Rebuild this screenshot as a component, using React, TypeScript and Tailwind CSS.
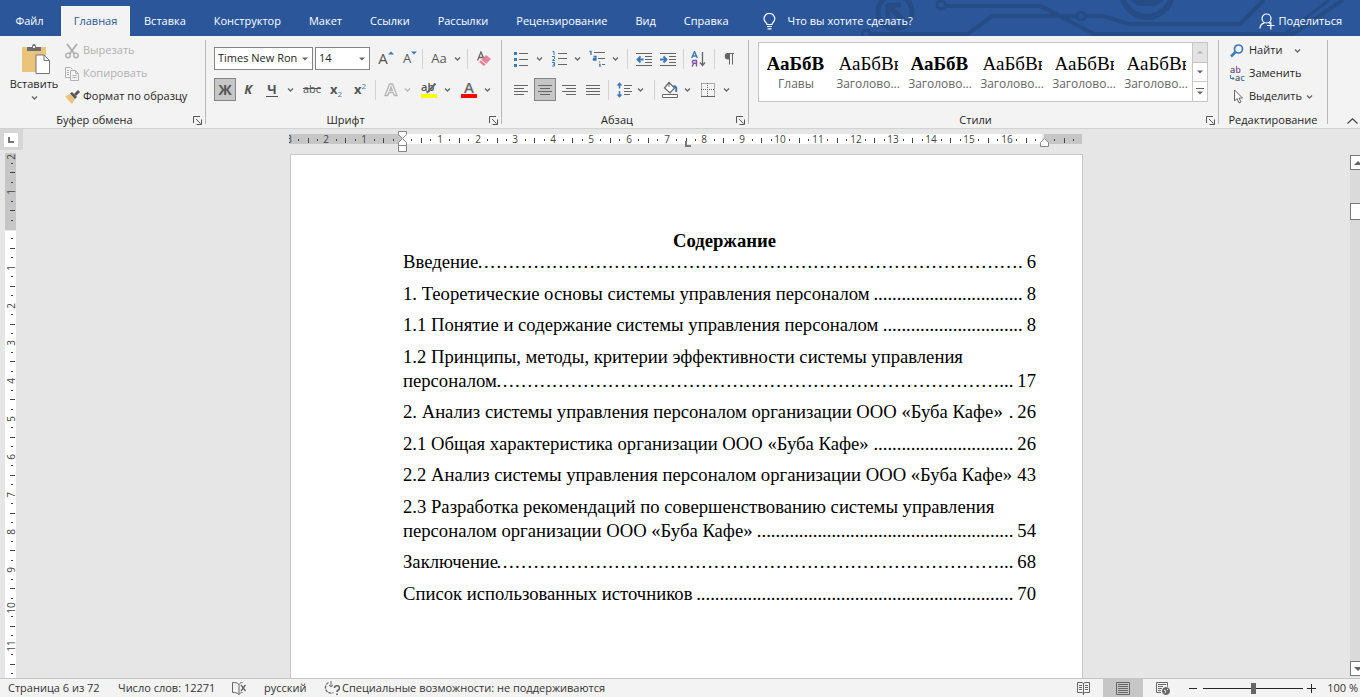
import type { ReactNode } from 'react';

const GRAY = '#666666';
const BLUE = '#3b78b8';

const tabs = ['Вставка', 'Конструктор', 'Макет', 'Ссылки', 'Рассылки', 'Рецензирование', 'Вид', 'Справка'];

const styleItems = [
  { label: 'Главы', sample: 'АаБбВ', bold: true },
  { label: 'Заголово...', sample: 'АаБбВв', bold: false },
  { label: 'Заголово...', sample: 'АаБбВ', bold: true },
  { label: 'Заголово...', sample: 'АаБбВв', bold: false },
  { label: 'Заголово...', sample: 'АаБбВв', bold: false },
  { label: 'Заголово...', sample: 'АаБбВв', bold: false },
];

interface TocEntry {
  lead?: string;
  text: string;
  fill: string;
  page: string;
}

const toc: TocEntry[] = [
  { text: 'Введение', fill: '…'.repeat(29) + '.', page: '6' },
  { text: '1. Теоретические основы системы управления персоналом', fill: '.'.repeat(32), page: '8' },
  { text: '1.1 Понятие и содержание системы управления персоналом', fill: '.'.repeat(30), page: '8' },
  {
    lead: '1.2 Принципы, методы, критерии эффективности системы управления',
    text: 'персоналом',
    fill: '…'.repeat(27) + '...',
    page: '17',
  },
  { text: '2. Анализ системы управления персоналом организации ООО «Буба Кафе»', fill: '.', page: '26' },
  { text: '2.1 Общая характеристика организации ООО «Буба Кафе»', fill: '.'.repeat(30), page: '26' },
  { text: '2.2 Анализ системы управления персоналом организации ООО «Буба Кафе»', fill: '', page: '43' },
  {
    lead: '2.3 Разработка рекомендаций по совершенствованию системы управления',
    text: 'персоналом организации ООО «Буба Кафе»',
    fill: '.'.repeat(55),
    page: '54',
  },
  { text: 'Заключение', fill: '…'.repeat(27) + '...', page: '68' },
  { text: 'Список использованных источников', fill: '.'.repeat(68), page: '70' },
];

const Chevron = ({ color = GRAY }: { color?: string }) => (
  <svg width="7" height="4" viewBox="0 0 7 4" fill="none" stroke={color} strokeWidth="1.3">
    <path d="M1 .5 3.5 3 6 .5" />
  </svg>
);

const Caret = ({ up = false, color = GRAY }: { up?: boolean; color?: string }) => (
  <svg className="shrink-0" width="6" height="4" viewBox="0 0 6 4" fill={color}>
    <path d={up ? 'M0 3.5h6L3 .5z' : 'M0 .5h6L3 3.5z'} />
  </svg>
);

const Divider = ({ className = '' }: { className?: string }) => (
  <span className={`h-5 w-px shrink-0 bg-[#d2d2d2] ${className}`} />
);

interface ToolProps {
  label: string;
  className?: string;
  active?: boolean;
  children: ReactNode;
}

const Tool = ({ label, className = 'w-6', active, children }: ToolProps) => (
  <button
    type="button"
    aria-label={label}
    className={`flex h-[23px] shrink-0 items-center justify-center text-[#555555] ${className} ${
      active ? 'border border-[#858585] bg-[#c6c6c6]' : ''
    }`}
  >
    {children}
  </button>
);

const Drop = ({ label, className = 'w-3', color }: { label: string; className?: string; color?: string }) => (
  <Tool label={label} className={className}>
    <Chevron color={color} />
  </Tool>
);

interface GroupProps {
  title: string;
  className?: string;
  launcher?: boolean;
  children: ReactNode;
}

const Group = ({ title, className = '', launcher = true, children }: GroupProps) => (
  <section aria-label={title} className={`flex h-[92px] flex-col ${className}`}>
    <div className="min-h-0 flex-1">{children}</div>
    <div className={`flex h-4 items-center ${launcher ? 'pr-[3px]' : ''}`}>
      <span className={`flex-1 text-center text-[11px] whitespace-nowrap ${launcher ? 'pr-1' : ''}`}>{title}</span>
      {launcher && (
        <button type="button" aria-label={`${title}: параметры`} className="w-[9px]">
          <svg width="9" height="9" viewBox="0 0 9 9" fill="none" stroke="#555555">
            <path d="M.5 7V.5H7M3 3l4.500 4.500M8.500 3.500v5h-5" />
          </svg>
        </button>
      )}
    </div>
  </section>
);

const GroupLine = () => <span className="mt-1 h-[84px] w-px shrink-0 bg-[#b8b8b8]" />;

const Lines = ({ rows }: { rows: [number, number][] }) => (
  <svg width="16" height="16" viewBox="0 0 16 16" stroke={GRAY}>
    {rows.map(([from, to], i) => (
      <path key={i} d={`M${from} ${3.5 + i * 3}H${to}`} />
    ))}
  </svg>
);

const HeaderArt = () => (
  <svg className="absolute top-0 right-0 h-9 w-[520px]" viewBox="840 0 520 36" fill="none" stroke="#264c86" strokeWidth="4">
    <circle cx="895" cy="12" r="17" strokeWidth="5" />
    <path d="M887 5h14M888 4v14M889 6l14 14" strokeWidth="5" />
    <circle cx="941" cy="5" r="4" strokeWidth="3" />
    <path d="M945 6h95l18 9 36 19h199l50-34" />
    <circle cx="866" cy="34" r="4" strokeWidth="3" />
    <path d="M870 34h98l24-18h85M1085 16h18l26 8h111l24-24" />
    <circle cx="1081" cy="16" r="4" strokeWidth="3" />
    <circle cx="1147" cy="-8" r="25" strokeWidth="6" />
    <path d="M1130 0h34l-8 6h-18z" fill="#264c86" stroke="none" />
    <path d="m1285 34 44-34" strokeWidth="3" />
  </svg>
);

const Header = () => (
  <header className="relative flex h-9 shrink-0 items-end overflow-hidden bg-[#2b579a] text-[11px] text-white">
    <HeaderArt />
    <nav className="relative flex h-[30px]">
      <button type="button" className="w-[61px] pr-[2px]">
        Файл
      </button>
      <button type="button" className="w-[69px] bg-[#f3f3f3] text-[#2b579a]">
        Главная
      </button>
      {tabs.map((tab) => (
        <button key={tab} type="button" className="px-[14px] whitespace-nowrap">
          {tab}
        </button>
      ))}
    </nav>
    <button type="button" className="relative ml-5 flex h-[30px] items-center gap-3">
      <svg width="13" height="17" viewBox="0 0 13 17" fill="none" stroke="white" strokeWidth="1.2">
        <path d="M4 11.500C4 9.500 1 9 1 5.800a5.300 5.300 0 0 1 10.800 0C11.800 9 9 9.500 9 11.500zM4 13.500h5M4.500 15.800h4" />
      </svg>
      Что вы хотите сделать?
    </button>
    <button type="button" className="relative mr-[18px] ml-auto flex h-[30px] items-center gap-1">
      <svg width="16" height="17" viewBox="0 0 16 17" fill="none" stroke="white" strokeWidth="1.200">
        <circle cx="7.500" cy="5.500" r="4.500" />
        <path d="M1 15.500c0-3 2-5 4.500-5.600M9.500 9.500l1.500 1M8 12.500h7.500M11.800 9v7.500" />
      </svg>
      Поделиться
    </button>
  </header>
);

const ClipboardGroup = () => (
  <Group title="Буфер обмена" className="w-[205px]">
    <div className="flex">
      <button type="button" className="flex w-[68px] flex-col items-center pt-2 text-[11px]">
        <svg className="ml-1" width="30" height="32" viewBox="0 0 30 32">
          <path d="M1 3h24v25H1z" fill="#ebc47c" />
          <path d="M6 3h5c0-4 4-4 4 0h5v4H6z" fill="#6d6d6d" />
          <path d="M12 2h2v2h-2z" fill="#f3f3f3" />
          <path d="M15 11h8l5.500 5.500v13H15z" fill="white" stroke="#777777" />
          <path d="M23 11v5.500h5.500" fill="none" stroke="#777777" />
        </svg>
        <span className="mb-1 leading-4">Вставить</span>
        <Chevron />
      </button>
      <div className="-ml-[3px] flex flex-col pt-[3px] text-[11px]">
        <button type="button" disabled className="flex h-[23px] items-center gap-1 text-[#b1b1b1]">
          <svg width="14" height="16" viewBox="0 0 14 16" fill="none" stroke="#b1b1b1" strokeWidth="1.500">
            <path d="M2 1l7.500 10M12 1 4.500 11" strokeWidth="2" />
            <circle cx="3" cy="12.500" r="2.200" />
            <circle cx="11" cy="12.500" r="2.200" />
          </svg>
          Вырезать
        </button>
        <button type="button" disabled className="flex h-[23px] items-center gap-1 text-[#b1b1b1]">
          <svg width="14" height="14" viewBox="0 0 14 14" fill="none" stroke="#b1b1b1">
            <path d="M5 10.500H.5v-10h5l2 2M5.500 3.500h5l3 3v7h-8zM10.500 3.500v3h3M7.500 8.500h4M7.500 10.500h4M2 3.500h2M2 5.500h2M2 7.500h2" />
          </svg>
          Копировать
        </button>
        <button type="button" className="flex h-[23px] items-center gap-[3px] whitespace-nowrap">
          <svg width="15" height="14" viewBox="0 0 15 14">
            <path d="M0 6.500 5 4l5 5-3 5z" fill="#ebc47c" />
            <path d="M5 3.500 7 2l5 5-2 2z" fill="#555555" />
            <path d="m9 4 4-4 2 2-4 4z" fill="#555555" />
          </svg>
          Формат по образцу
        </button>
      </div>
    </div>
  </Group>
);

const FontGroup = () => (
  <Group title="Шрифт" className="w-[295px]">
    <div className="flex flex-col gap-2 pt-[11px] pl-2">
      <div className="flex h-[23px] items-center">
        <div className="flex h-[23px] w-[99px] items-center border border-[#858585] bg-white pr-1 text-[11px]">
          <select aria-label="Шрифт" className="h-full min-w-0 flex-1 appearance-none bg-white pl-[3px]">
            <option>Times New Ron</option>
          </select>
          <Caret />
        </div>
        <div className="ml-[2px] flex h-[23px] w-[55px] items-center border border-[#858585] bg-white pr-1 text-[11px]">
          <select aria-label="Размер шрифта" className="h-full min-w-0 flex-1 appearance-none bg-white pl-[3px]">
            <option>14</option>
          </select>
          <Caret />
        </div>
        <Tool label="Увеличить размер" className="ml-1 w-6">
          <span className="text-[15px]">A</span>
          <span className="-mt-3">
            <Caret up color={BLUE} />
          </span>
        </Tool>
        <Tool label="Уменьшить размер">
          <span className="text-[13px]">A</span>
          <span className="-mt-3">
            <Caret color={BLUE} />
          </span>
        </Tool>
        <Divider />
        <Tool label="Регистр" className="w-8 text-[13px]">
          Aa
        </Tool>
        <Drop label="Регистр: список" className="-ml-1 w-3" />
        <Divider className="ml-1" />
        <Tool label="Очистить форматирование" className="ml-1 w-6">
          <svg width="16" height="16" viewBox="0 0 16 16">
            <path d="M1.500 9.500 5 1l3 7M3 6.500h4" fill="none" stroke={GRAY} strokeWidth="1.300" />
            <path d="m3 11 7-7 5 4-7 7z" fill="#e8829a" />
            <path d="m5 9 5 4" stroke="#f3f3f3" />
          </svg>
        </Tool>
      </div>
      <div className="flex h-[23px] items-center">
        <Tool label="Полужирный" className="w-[22px]" active>
          <b className="text-sm">Ж</b>
        </Tool>
        <Tool label="Курсив">
          <b className="text-[13px] italic">К</b>
        </Tool>
        <Tool label="Подчеркнутый">
          <b className="border-b border-[#555555] px-px text-[13px] leading-[14px]">Ч</b>
        </Tool>
        <Drop label="Подчеркивание" className="w-[13px]" />
        <Tool label="Зачеркнутый" className="ml-[3px] w-6">
          <span className="text-[11px] line-through">abc</span>
        </Tool>
        <Tool label="Подстрочный">
          <b className="text-[13px]">x</b>
          <span className="mt-2 text-[8px] text-[#3b78b8]">2</span>
        </Tool>
        <Tool label="Надстрочный">
          <b className="text-[13px]">x</b>
          <span className="-mt-2 text-[8px] text-[#3b78b8]">2</span>
        </Tool>
        <Divider className="ml-[3px]" />
        <Tool label="Эффекты" className="ml-[3px] w-6">
          <svg width="14" height="14" viewBox="0 0 14 14" fill="none" stroke="#b5b5b5" strokeWidth="1.300">
            <path d="M1 12.500 5.500 1h3L13 12.500h-2.800L9 9.500H5l-1.200 3zM5.800 7.300h2.400L7 4z" />
          </svg>
        </Tool>
        <Drop label="Эффекты: список" className="w-2" color="#b5b5b5" />
        <Tool label="Цвет выделения" className="ml-[6px] w-6">
          <svg width="16" height="18" viewBox="0 0 16 18">
            <text x="0" y="10" fontSize="11" fontWeight="600" fontFamily="Open Sans" fill="#555555">
              ab
            </text>
            <path d="m14.500 2.500-7 8-2 1" stroke={GRAY} strokeWidth="2" />
            <path d="M0 13h16v4H0z" fill="#ffff00" />
          </svg>
        </Tool>
        <Drop label="Цвет выделения: список" />
        <Tool label="Цвет текста" className="ml-1 w-6">
          <svg width="16" height="18" viewBox="0 0 16 18">
            <text x="3" y="12" fontSize="15" fontFamily="Open Sans" fontWeight="600" fill="#666666">
              A
            </text>
            <path d="M0 13h16v4H0z" fill="#ff0000" />
          </svg>
        </Tool>
        <Drop label="Цвет текста: список" />
      </div>
    </div>
  </Group>
);

const ParagraphGroup = () => (
  <Group title="Абзац" className="w-[246px]">
    <div className="flex flex-col gap-2 pt-[11px] pl-[7px]">
      <div className="flex h-[23px] items-center">
        <Tool label="Маркеры">
          <svg width="14" height="16" viewBox="0 0 14 16" stroke={GRAY}>
            <path d="M5 2.500h9M5 8.500h9M5 14.500h9" />
            <path d="M0 2.500h3M0 8.500h3M0 14.500h3" stroke={BLUE} strokeWidth="3" />
          </svg>
        </Tool>
        <Drop label="Маркеры: список" />
        <Tool label="Нумерация" className="ml-[2px] w-6">
          <svg width="15" height="17" viewBox="0 0 15 17" stroke={GRAY}>
            <path d="M6 3.500h9M6 8.500h9M6 14.500h9" />
            <path d="M.5 1.500H2V5M0 6.500h2.500v1.800L.5 10.500H3M0 12.500h2.500v3.500H0M1 14.200h1.500" fill="none" stroke={BLUE} />
          </svg>
        </Tool>
        <Drop label="Нумерация: список" />
        <Tool label="Многоуровневый список" className="ml-[2px] w-6">
          <svg width="16" height="17" viewBox="0 0 16 17" stroke={GRAY}>
            <path d="M5 2.500h11M9 8.500h7M13 14.500h3" />
            <path
              d="M.5 1.500H2V5M4.500 6.500H7V10H4.500V8.500H7M10.500 11.500v1M10 14.500h1V17"
              fill="none"
              stroke={BLUE}
              strokeWidth="1.300"
            />
          </svg>
        </Tool>
        <Drop label="Многоуровневый: список" />
        <Divider className="ml-[6px]" />
        <Tool label="Уменьшить отступ" className="ml-1 w-6">
          <svg width="16" height="14" viewBox="0 0 16 14" stroke={GRAY}>
            <path d="M0 1.500h16M9 4.500h7M9 7.500h7M9 10.500h7M0 13.500h16" />
            <path d="M7.500 7.500H2M4.500 4.500l-3 3 3 3" fill="none" stroke={BLUE} strokeWidth="1.800" />
          </svg>
        </Tool>
        <Tool label="Увеличить отступ">
          <svg width="16" height="14" viewBox="0 0 16 14" stroke={GRAY}>
            <path d="M0 1.500h16M9 4.500h7M9 7.500h7M9 10.500h7M0 13.500h16" />
            <path d="M0 7.500h6M3.500 4.500l3 3-3 3" fill="none" stroke={BLUE} strokeWidth="1.800" />
          </svg>
        </Tool>
        <Divider className="ml-[3px]" />
        <Tool label="Сортировка" className="ml-[2px] w-6">
          <svg width="15" height="16" viewBox="0 0 15 16">
            <path d="M.7 7 3.500.5 6.300 7M1.500 5h4" fill="none" stroke={BLUE} strokeWidth="1.400" />
            <path d="M1 15.500 3 12M5.500 9v6.500M5.500 9.500h-3c-1.500 0-1.500 2.800 0 2.800h3" fill="none" stroke="#8550a8" strokeWidth="1.400" />
            <path d="M11.500 1v13M9 11.500l2.500 3 2.500-3" fill="none" stroke={GRAY} strokeWidth="1.300" />
          </svg>
        </Tool>
        <Divider className="ml-1" />
        <Tool label="Все знаки" className="ml-[2px] w-6">
          <svg width="10" height="13" viewBox="0 0 10 13">
            <path d="M6 1H4a3 3 0 0 0 0 6.500h2z" fill={GRAY} />
            <path d="M5.500 1v11.500M8.500 1v11.500M3 1.500h7" fill="none" stroke={GRAY} />
          </svg>
        </Tool>
      </div>
      <div className="flex h-[23px] items-center">
        <Tool label="По левому краю">
          <Lines rows={[[1, 15], [1, 11], [1, 15], [1, 11]]} />
        </Tool>
        <Tool label="По центру" active className="ml-px w-[22px]">
          <Lines rows={[[1, 15], [3, 13], [1, 15], [3, 13]]} />
        </Tool>
        <Tool label="По правому краю" className="ml-px w-6">
          <Lines rows={[[1, 15], [5, 15], [1, 15], [5, 15]]} />
        </Tool>
        <Tool label="По ширине">
          <Lines rows={[[1, 15], [1, 15], [1, 15], [1, 15]]} />
        </Tool>
        <Divider className="ml-[3px]" />
        <Tool label="Интервал" className="ml-[3px] w-6">
          <svg width="15" height="16" viewBox="0 0 15 16" fill="none" stroke={GRAY}>
            <path d="M7 3.500h8M7 6.500h6M7 9.500h8M7 12.500h6" />
            <path d="M2.500 1v5.500M.5 3.500l2-2.200 2 2.200M2.500 9v6M.5 12.500l2 2.200 2-2.200" stroke={BLUE} strokeWidth="1.500" />
          </svg>
        </Tool>
        <Drop label="Интервал: список" className="-ml-[2px] w-3" />
        <Divider className="ml-2" />
        <Tool label="Заливка" className="ml-[3px] w-6">
          <svg width="16" height="17" viewBox="0 0 16 17" fill="none" stroke={GRAY}>
            <path d="m7 1.500 5.500 5.500L8 12 2.500 7z" fill="white" strokeWidth="1.200" />
            <path d="M7 6V1" />
            <path d="M11.500 5c2.500 0 3.500 2 2.500 6" stroke={BLUE} strokeWidth="2" />
            <path d="M.5 13.500h15v3H.5z" fill="white" />
          </svg>
        </Tool>
        <Drop label="Заливка: список" className="-ml-px w-3" />
        <Tool label="Границы" className="ml-[3px] w-6">
          <svg width="14" height="14" viewBox="0 0 14 14" stroke={GRAY}>
            <path d="M.5.5h13v13M.5.5v13M6.500 0v13M0 6.500h13" fill="none" strokeDasharray="1 1" />
            <path d="M0 13.500h14" />
          </svg>
        </Tool>
        <Drop label="Границы: список" />
      </div>
    </div>
  </Group>
);

const StylesGroup = () => (
  <Group title="Стили" className="min-w-0 flex-1">
    <div className="pt-[6px] pr-[10px] pl-[9px]">
      <div className="flex h-[60px] border border-[#c6c6c6] bg-white">
        <div className="flex min-w-0 flex-1 overflow-hidden pl-px">
          {styleItems.map((item, i) => (
            <button key={i} type="button" className="flex w-[72px] shrink-0 flex-col items-center pt-[9px]">
              <span
                className={`w-[59px] overflow-hidden text-left font-['Liberation_Serif',serif] text-[19px] leading-6 whitespace-nowrap text-black ${
                  item.bold ? 'font-bold' : ''
                }`}
              >
                {item.sample}
              </span>
              <span className="text-xs leading-4 whitespace-nowrap text-[#666666]">{item.label}</span>
            </button>
          ))}
        </div>
        <div className="flex w-[15px] flex-col border-l border-[#c6c6c6]">
          <button type="button" aria-label="Вверх" className="flex flex-1 items-center justify-center bg-[#e3e3e3]">
            <Caret up color="#b5b5b5" />
          </button>
          <button
            type="button"
            aria-label="Вниз"
            className="flex flex-1 items-center justify-center border-y border-[#c6c6c6]"
          >
            <Caret />
          </button>
          <button type="button" aria-label="Все стили" className="flex flex-1 flex-col items-center justify-center gap-[2px]">
            <span className="h-px w-2 bg-[#666666]" />
            <Caret />
          </button>
        </div>
      </div>
    </div>
  </Group>
);

const EditingGroup = () => (
  <Group title="Редактирование" className="w-[108px]" launcher={false}>
    <div className="flex flex-col pt-[3px] pl-[11px] text-[11px]">
      <button type="button" className="flex h-[23px] items-center">
        <svg width="14" height="14" viewBox="0 0 14 14" fill="none" stroke={BLUE}>
          <circle cx="8.500" cy="5" r="4" strokeWidth="1.700" />
          <path d="M5.500 8 1 12.500" strokeWidth="2.500" />
        </svg>
        <span className="mr-3 ml-[5px]">Найти</span>
        <Chevron />
      </button>
      <button type="button" className="flex h-[23px] items-center">
        <svg width="16" height="18" viewBox="0 0 16 18" fontSize="9" fontFamily="Open Sans" fontWeight="600">
          <text x="0" y="8" fill="#555555">
            a<tspan fill="#8550a8">b</tspan>
          </text>
          <text x="5" y="16" fill="#555555">
            a<tspan fill={BLUE}>c</tspan>
          </text>
          <path d="M.5 10v3.500H4M2.500 12 4 13.500 2.500 15" fill="none" stroke={BLUE} />
        </svg>
        <span className="ml-[3px]">Заменить</span>
      </button>
      <button type="button" className="flex h-[23px] items-center">
        <svg width="14" height="15" viewBox="0 0 14 15" fill="white" stroke={GRAY}>
          <path d="M4.500 1v11L7 9.500 9 14l2-1-2-4h3.500z" />
        </svg>
        <span className="mr-1 ml-[5px]">Выделить</span>
        <Chevron />
      </button>
    </div>
  </Group>
);

const Ribbon = () => (
  <div className="flex h-[93px] shrink-0 border-b border-[#d2d2d2] bg-[#f3f3f3] text-[#262626]">
    <ClipboardGroup />
    <GroupLine />
    <FontGroup />
    <GroupLine />
    <ParagraphGroup />
    <GroupLine />
    <StylesGroup />
    <GroupLine />
    <EditingGroup />
    <GroupLine />
    <button type="button" aria-label="Свернуть ленту" className="flex w-8 items-end justify-end pr-[2px] pb-1">
      <svg width="11" height="6" viewBox="0 0 11 6" fill="none" stroke="#444444" strokeWidth="1.200">
        <path d="M.5 5.500 5.500.8l5 4.700" />
      </svg>
    </button>
  </div>
);

// 96 dpi: one centimetre of the ruler
const CM = 37.8;

const rulerMarks = (from: number, to: number) => {
  const marks: { at: number; kind: 'number' | 'half' | 'dot'; value: number }[] = [];
  for (let q = from * 4; q <= to * 4; q++) {
    if (q === 0) continue;
    const kind = q % 4 === 0 ? 'number' : q % 2 === 0 ? 'half' : 'dot';
    marks.push({ at: Math.round((q / 4) * CM), kind, value: Math.abs(q / 4) });
  }
  return marks;
};

const HorizontalRuler = () => (
  <svg className="w-[795px] shrink-0" height="24" viewBox="-113 0 795 24" fontSize="10" fontFamily="Open Sans" fill="#444444">
    <path d="M-113 5H0v10h-113zM642 5h38v10h-38z" fill="#c6c6c6" />
    <path d="M0 5h640v10H0z" fill="white" />
    {rulerMarks(-3, 17.75).map(({ at, kind, value }) => {
      if (kind === 'number')
        return value > 16 ? null : (
          <text key={at} x={at} y="14" textAnchor="middle">
            {value}
          </text>
        );
      return <rect key={at} x={at} y={kind === 'half' ? 9 : 10} width="1" height={kind === 'half' ? 5 : 2} />;
    })}
    <g fill="white" stroke="#858585">
      <path d="M-3.500 2.500h8v3l-4 4-4-4zM-3.500 16.500v-3l4-4 4 4v3zM-3.500 16.500h8v6h-8z" />
      <path d="M638.500 17.500v-4l4-4 4 4v4z" />
    </g>
    <path d="M284 12v5h5" fill="none" stroke="#777777" strokeWidth="2" />
  </svg>
);

const VerticalRuler = () => (
  <svg className="h-full w-[23px] shrink-0" fontSize="10" fontFamily="Open Sans" fill="#444444">
    <rect x="5" y="0" width="11" height="77" fill="#c6c6c6" />
    <rect x="5" y="78" width="11" height="2000" fill="white" />
    {rulerMarks(-1.75, 14).map(({ at, kind, value }) => {
      const y = at + 77;
      if (kind === 'number')
        return (
          <text key={at} transform={`translate(15 ${y}) rotate(-90)`} textAnchor="middle">
            {value}
          </text>
        );
      return <rect key={at} x={kind === 'half' ? 10 : 11} y={y - 1} width={kind === 'half' ? 5 : 2} height="1" />;
    })}
    <text transform="translate(15 4) rotate(-90)" textAnchor="middle">
      2
    </text>
  </svg>
);

const Scrollbar = () => (
  <div className="mt-[2px] mb-[2px] flex w-[10px] shrink-0 flex-col overflow-hidden bg-[#dadada]">
    <button
      type="button"
      aria-label="Прокрутить вверх"
      className="flex h-[15px] w-[17px] items-center border border-[#777777] bg-white pl-[3px]"
    >
      <svg width="8" height="4" viewBox="0 0 8 4" fill={GRAY}>
        <path d="M0 4h8L4 0z" />
      </svg>
    </button>
    <span className="mt-[33px] h-[17px] w-[17px] border border-[#777777] bg-white" />
    <button
      type="button"
      aria-label="Прокрутить вниз"
      className="mt-auto flex h-[15px] w-[17px] items-center border border-[#777777] bg-white pl-[3px]"
    >
      <svg width="8" height="4" viewBox="0 0 8 4" fill={GRAY}>
        <path d="M0 0h8L4 4z" />
      </svg>
    </button>
  </div>
);

const TocRow = ({ lead, text, fill, page }: TocEntry) => (
  <li className="whitespace-nowrap odd:mb-2 even:mb-[7px]">
    {lead && <span className="block">{lead}</span>}
    <span className="flex">
      <span>{text}</span>
      <span className="flex min-w-0 flex-1 justify-end">{fill}</span>
      <span className="pl-1">{page}</span>
    </span>
  </li>
);

const Page = () => (
  <article className="mt-px w-[793px] shrink-0 border border-b-0 border-[#c6c6c6] bg-white pt-[77px] pr-9 pl-28 font-['Liberation_Serif',serif] text-[14pt] leading-[24px] text-black">
    <h1 className="text-center leading-[18px] font-bold">Содержание</h1>
    <ol className="pr-[10px]">
      {toc.map((entry) => (
        <TocRow key={entry.text} {...entry} />
      ))}
    </ol>
  </article>
);

const Workspace = () => (
  <main className="flex min-h-0 flex-1 flex-col overflow-hidden">
    <div className="flex h-6 shrink-0">
      <button type="button" aria-label="Табуляция" className="flex h-[21px] w-[23px] shrink-0 items-center bg-[#d6d6d6] pl-1">
        <span className="flex h-[14px] w-[14px] items-center justify-center bg-white">
          <span className="h-[6px] w-[6px] border-b-2 border-l-2 border-[#777777]" />
        </span>
      </button>
      <div className="flex min-w-0 flex-1 justify-center">
        <HorizontalRuler />
      </div>
      <span className="w-[10px] shrink-0" />
    </div>
    <div className="flex min-h-0 flex-1 overflow-hidden">
      <VerticalRuler />
      <div className="flex min-w-0 flex-1 justify-center">
        <Page />
      </div>
      <Scrollbar />
    </div>
  </main>
);

const StatusBar = () => (
  <footer className="flex h-[19px] shrink-0 items-center border-t border-[#c6c6c6] bg-[#f3f3f3] text-[11px] whitespace-nowrap text-[#333333]">
    <span className="w-[110px] pl-2">Страница 6 из 72</span>
    <span className="w-[122px] pl-2">Число слов: 12271</span>
    <svg className="w-[14px]" height="13" viewBox="0 0 14 13" fill="none" stroke={GRAY}>
      <path d="M7 2.500C5 .5 3 .5.500.5v10c2.500 0 4.500 0 6.500 2zM7 2.500c1-1.500 2-2 3.500-2M7 12.500c1-1.500 2-2 3.500-2" />
      <path d="m9 3 4.500 6M13.500 3 9 9" strokeWidth="1.300" />
    </svg>
    <span className="w-[78px] pl-[18px]">русский</span>
    <svg className="w-4" height="16" viewBox="0 0 16 16" fill="none" stroke={GRAY}>
      <path d="M4.500 2.500a5.500 5.500 0 1 0 5 10" strokeWidth="1.300" strokeDasharray="3 1" />
      <path d="M7 1v6M5 5l2 2 2-2" />
      <path d="M10.500 8c0-3 5-3 5 0 0 2-2.500 2-2.500 4M13 13.500V15" strokeWidth="1.700" />
    </svg>
    <span className="pl-[2px]">Специальные возможности: не поддерживаются</span>
    <div className="ml-auto flex h-full items-center">
      <button type="button" aria-label="Режим чтения" className="flex h-full w-10 items-center justify-center">
        <svg width="13" height="13" viewBox="0 0 13 13" fill="none" stroke={GRAY}>
          <path d="M.5.5H5l1.500 1L8 .5h4.500v10H8l-1.500 1-1.500-1H.5zM6.500 1v12M2 3.500h3M2 5.500h3M2 7.500h3M8 3.500h3M8 5.500h3M8 7.500h3" />
        </svg>
      </button>
      <button type="button" aria-label="Разметка страницы" className="flex h-full w-10 items-center justify-center bg-[#c6c6c6]">
        <svg width="14" height="13" viewBox="0 0 14 13" fill="none" stroke={GRAY}>
          <path d="M.5.5h13v12H.5zM2 2.500h10M2 4.500h10M2 6.500h10M2 8.500h10M2 10.500h10" />
        </svg>
      </button>
      <button type="button" aria-label="Веб-документ" className="flex h-full w-10 items-center justify-center">
        <svg width="14" height="13" viewBox="0 0 14 13" fill="none" stroke={GRAY}>
          <path d="M5 10.500H.5V.5h11v4M2 2.500h8M2 4.500h5M2 6.500h4M2 8.500h3" />
          <circle cx="10" cy="9" r="3.500" fill={GRAY} />
          <path d="m8 8 2 1-1 2M11 7l1 1" stroke="#f3f3f3" />
        </svg>
      </button>
      <button type="button" aria-label="Уменьшить" className="flex w-5 items-center justify-center">
        <span className="h-px w-2 bg-[#262626]" />
      </button>
      <input
        type="range"
        aria-label="Масштаб"
        defaultValue="50"
        className="h-[13px] w-[100px] appearance-none bg-transparent [&::-webkit-slider-runnable-track]:h-px [&::-webkit-slider-runnable-track]:bg-[#262626] [&::-webkit-slider-thumb]:-mt-[5px] [&::-webkit-slider-thumb]:h-[11px] [&::-webkit-slider-thumb]:w-[5px] [&::-webkit-slider-thumb]:appearance-none [&::-webkit-slider-thumb]:bg-[#666666]"
      />
      <button type="button" aria-label="Увеличить" className="flex w-[17px] items-center justify-center">
        <svg width="9" height="9" viewBox="0 0 9 9" stroke="#262626">
          <path d="M0 4.500h9M4.500 0v9" />
        </svg>
      </button>
      <span className="w-10 pr-[2px] text-right">100 %</span>
    </div>
  </footer>
);

export default function App() {
  return (
    <div className="flex h-screen flex-col overflow-hidden bg-[#e6e6e6] font-['Open_Sans','Noto_Sans',sans-serif]">
      <Header />
      <Ribbon />
      <Workspace />
      <StatusBar />
    </div>
  );
}
